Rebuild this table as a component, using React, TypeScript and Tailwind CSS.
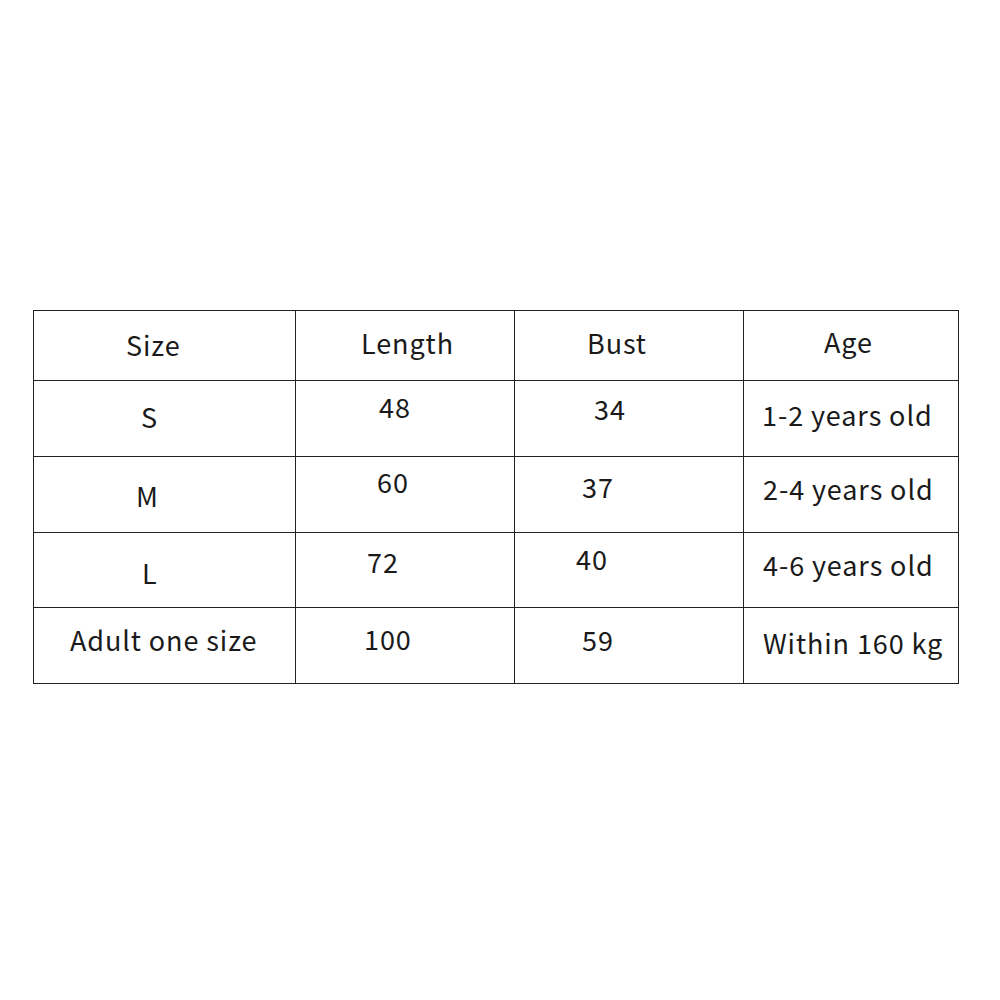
type Cell = { text: string; pos: string }

// per-cell offsets: the source image has hand-placed, slightly uneven text
const rows: { height: string; cells: Cell[] }[] = [
  {
    height: 'h-[70px]',
    cells: [
      { text: 'Size', pos: 'pl-[92px] pt-[20px]' },
      { text: 'Length', pos: 'pl-[65px] pt-[18px]' },
      { text: 'Bust', pos: 'pl-[72px] pt-[18px]' },
      { text: 'Age', pos: 'pl-[80px] pt-[17px]' },
    ],
  },
  {
    height: 'h-[76px]',
    cells: [
      { text: 'S', pos: 'pl-[107px] pt-[22px]' },
      { text: '48', pos: 'pl-[83px] pt-[12px]' },
      { text: '34', pos: 'pl-[79px] pt-[14px]' },
      { text: '1-2 years old', pos: 'pl-[18px] pt-[20px]' },
    ],
  },
  {
    height: 'h-[76px]',
    cells: [
      { text: 'M', pos: 'pl-[102px] pt-[25px]' },
      { text: '60', pos: 'pl-[81px] pt-[11px]' },
      { text: '37', pos: 'pl-[67px] pt-[16px]' },
      { text: '2-4 years old', pos: 'pl-[19px] pt-[18px]' },
    ],
  },
  {
    height: 'h-[75px]',
    cells: [
      { text: 'L', pos: 'pl-[108px] pt-[26px]' },
      { text: '72', pos: 'pl-[71px] pt-[15px]' },
      { text: '40', pos: 'pl-[61px] pt-[12px]' },
      { text: '4-6 years old', pos: 'pl-[19px] pt-[18px]' },
    ],
  },
  {
    height: 'h-[76px]',
    cells: [
      { text: 'Adult one size', pos: 'pl-[36px] pt-[18px]' },
      { text: '100', pos: 'pl-[68px] pt-[17px]' },
      { text: '59', pos: 'pl-[67px] pt-[18px]' },
      { text: 'Within 160 kg', pos: 'pl-[19px] pt-[21px]' },
    ],
  },
]

const widths = ['w-[262px]', 'w-[219px]', 'w-[229px]', 'w-[215px]']

export default function App() {
  return (
    <div className="w-[1000px] h-[1000px] bg-white pt-[310px] pl-[33px] font-['Noto_Sans_CJK_SC','Noto_Sans',sans-serif] text-[27px] leading-[27px] tracking-[0.9px] text-[#1a1a1a]">
      <div className="inline-flex flex-col border-t border-l border-[#222]">
        {rows.map((row, r) => (
          <div key={r} className={`flex ${row.height}`}>
            {row.cells.map((cell, c) => (
              <div
                key={c}
                className={`${widths[c]} h-full border-r border-b border-[#222] whitespace-nowrap ${cell.pos}`}
              >
                {cell.text}
              </div>
            ))}
          </div>
        ))}
      </div>
    </div>
  )
}
